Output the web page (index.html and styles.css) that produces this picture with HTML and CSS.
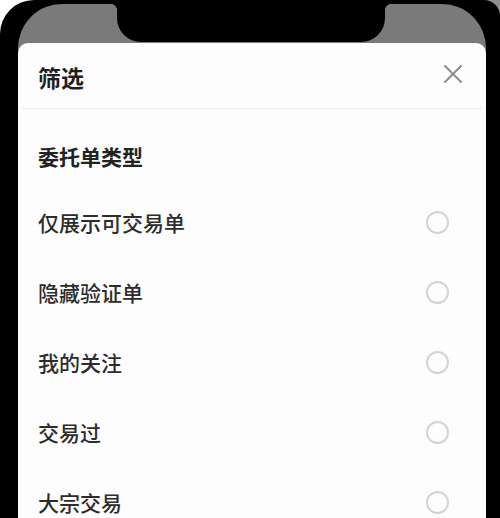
FILE: index.html
```html
<!DOCTYPE html>
<html lang="zh">
<head>
<meta charset="utf-8">
<title>筛选</title>
<link rel="stylesheet" href="styles.css">
</head>
<body>
<div class="phone">
  <div class="screen">
    <div class="statusbar">
      <div class="notch"></div>
    </div>
    <div class="sheet">
      <div class="sheet-header">
        <div class="sheet-title">筛选</div>
        <svg class="close" width="18" height="18" viewBox="0 0 18 18">
          <path d="M1 1 L17 17 M17 1 L1 17" stroke="#8a8a8a" stroke-width="1.8" fill="none" stroke-linecap="round"/>
        </svg>
      </div>
      <div class="divider"></div>
      <div class="section-title">委托单类型</div>
      <div class="options">
        <div class="option"><span class="label">仅展示可交易单</span><span class="radio"></span></div>
        <div class="option"><span class="label">隐藏验证单</span><span class="radio"></span></div>
        <div class="option"><span class="label">我的关注</span><span class="radio"></span></div>
        <div class="option"><span class="label">交易过</span><span class="radio"></span></div>
        <div class="option"><span class="label">大宗交易</span><span class="radio"></span></div>
      </div>
    </div>
  </div>
</div>
</body>
</html>
```

FILE: styles.css
```css
html, body {
  margin: 0;
  padding: 0;
}
body {
  width: 500px;
  height: 518px;
  overflow: hidden;
  background: linear-gradient(to right, #ffffff 50%, #8e8e8e 50%);
  font-family: "Noto Sans CJK SC", "Noto Sans", sans-serif;
}
.phone {
  width: 500px;
  height: 518px;
  box-sizing: border-box;
  background: #000;
  border-top-left-radius: 34px;
  border-top-right-radius: 16px;
  padding: 4px 14px 0 18px;
  overflow: hidden;
}
.screen {
  height: 100%;
  background: #7a7a7a;
  border-radius: 44px 44px 0 0;
  display: flex;
  flex-direction: column;
  overflow: hidden;
}
.statusbar {
  height: 39px;
  flex: none;
  display: flex;
  justify-content: center;
}
.notch {
  position: relative;
  width: 268px;
  height: 38px;
  margin-left: -2px;
  background: #000;
  border-radius: 0 0 24px 24px;
}
.notch::before,
.notch::after {
  content: "";
  position: absolute;
  top: 0;
  width: 7px;
  height: 7px;
}
.notch::before {
  left: -7px;
  background: radial-gradient(circle at 0 100%, transparent 7px, #000 7.5px);
}
.notch::after {
  right: -7px;
  background: radial-gradient(circle at 100% 100%, transparent 7px, #000 7.5px);
}
.sheet {
  flex: 1;
  background: #fdfdfd;
  border-radius: 10px 10px 0 0;
  color: #2a2a2a;
}
.sheet-header {
  height: 65px;
  display: flex;
  align-items: center;
  justify-content: space-between;
  padding: 0 24px 0 20px;
}
.sheet-title {
  font-size: 23px;
  font-weight: 700;
  line-height: 30px;
  margin-top: 2px;
  color: #1f1f1f;
}
.close {
  display: block;
  margin-top: -3px;
}
.divider {
  height: 1px;
  background: #ececec;
  margin: 0 4px;
}
.section-title {
  margin: 33px 0 0 20px;
  font-size: 21px;
  font-weight: 700;
  line-height: 28px;
  color: #222;
}
.options {
  margin-top: 17px;
}
.option {
  height: 70px;
  display: flex;
  align-items: center;
  justify-content: space-between;
  padding: 0 37px 0 20px;
}
.label {
  font-size: 21px;
  font-weight: 500;
  line-height: 28px;
  color: #2c2c2c;
}
.radio {
  width: 23px;
  height: 23px;
  box-sizing: border-box;
  border: 2px solid #d4d4d4;
  border-radius: 50%;
}
```
